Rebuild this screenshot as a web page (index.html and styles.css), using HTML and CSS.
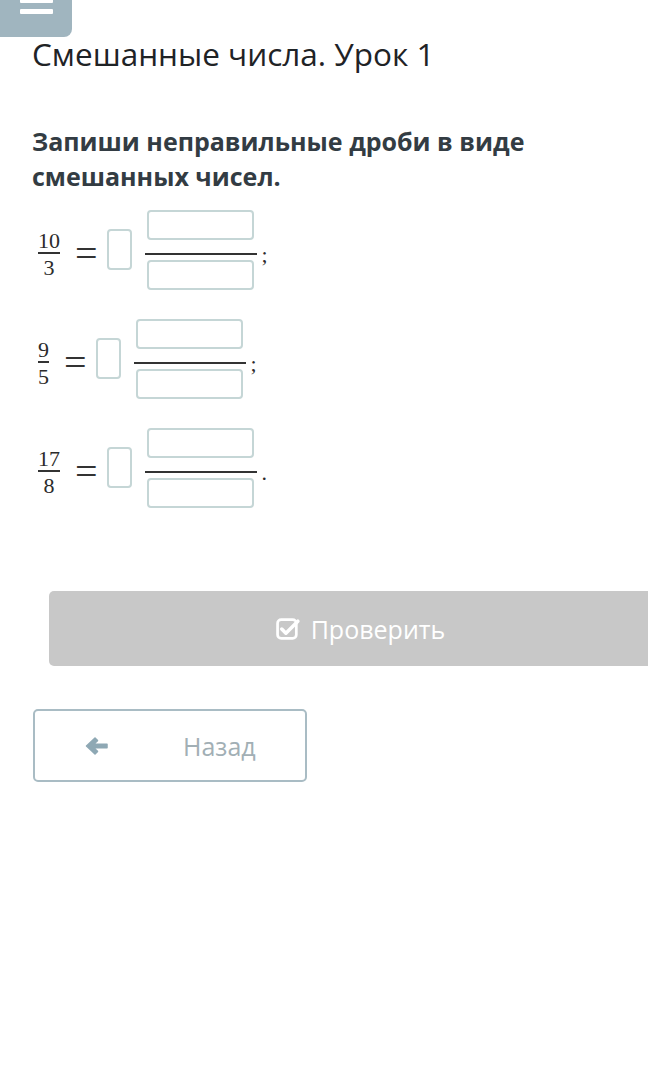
FILE: index.html
```html
<!DOCTYPE html>
<html lang="ru">
<head>
<meta charset="utf-8">
<title>Смешанные числа. Урок 1</title>
<link rel="stylesheet" href="styles.css">
</head>
<body>
<div class="menu-btn" aria-label="Меню">
  <span class="menu-bar bar-a"></span>
  <span class="menu-bar bar-b"></span>
</div>
<main class="page">
  <h1 class="title">Смешанные числа. Урок 1</h1>
  <p class="question">Запиши неправильные дроби в виде смешанных чисел.</p>

  <div class="task">
    <div class="row">
      <span class="frac"><span class="num">10</span><span class="bar"></span><span class="den">3</span></span>
      <span class="eq">=</span>
      <span class="box whole"></span>
      <span class="bigfrac"><span class="box part"></span><span class="bigbar"></span><span class="box part"></span></span>
      <span class="punct">;</span>
    </div>
    <div class="row">
      <span class="frac"><span class="num">9</span><span class="bar"></span><span class="den">5</span></span>
      <span class="eq">=</span>
      <span class="box whole"></span>
      <span class="bigfrac"><span class="box part"></span><span class="bigbar"></span><span class="box part"></span></span>
      <span class="punct">;</span>
    </div>
    <div class="row">
      <span class="frac"><span class="num">17</span><span class="bar"></span><span class="den">8</span></span>
      <span class="eq">=</span>
      <span class="box whole"></span>
      <span class="bigfrac"><span class="box part"></span><span class="bigbar"></span><span class="box part"></span></span>
      <span class="punct">.</span>
    </div>
  </div>

  <button class="check-btn" type="button">
    <svg class="check-icon" width="25" height="23" viewBox="0 0 24 22" aria-hidden="true">
      <rect x="1.5" y="2.5" width="18" height="18" rx="3.5" fill="none" stroke="#fff" stroke-width="2.6"/>
      <path d="M5.5 11.5 L9.5 15.5 L21 4" fill="none" stroke="#fff" stroke-width="3.4" stroke-linecap="round" stroke-linejoin="round"/>
    </svg>
    <span>Проверить</span>
  </button>

  <button class="back-btn" type="button">
    <svg class="back-icon" width="24" height="20" viewBox="0 0 24 20" aria-hidden="true">
      <path d="M1.5 10 L10 2 L12.5 4.6 L8.6 8.2 L22 8.2 L22 11.8 L8.6 11.8 L12.5 15.4 L10 18 Z" fill="#8ea8b4" stroke="#8ea8b4" stroke-width="1.5" stroke-linejoin="round"/>
    </svg>
    <span class="back-text">Назад</span>
  </button>
</main>
</body>
</html>
```
FILE: styles.css
```css
html, body {
  margin: 0;
  padding: 0;
  background: #fff;
  overflow-x: hidden;
}
body {
  width: 648px;
  height: 1092px;
  position: relative;
  font-family: "Open Sans", "Liberation Sans", sans-serif;
}
.menu-btn {
  position: absolute;
  left: 0;
  top: 0;
  width: 72px;
  height: 37px;
  background: #a0b5bf;
  border-bottom-right-radius: 8px;
}
.menu-bar {
  position: absolute;
  left: 20px;
  width: 33px;
  height: 5px;
  background: #fff;
  border-radius: 1px;
}
.bar-a { top: -2px; }
.bar-b { top: 9px; }

.page {
  padding: 32px 0 0 32px;
}
.title {
  margin: 0;
  font-weight: 400;
  font-size: 31.5px;
  line-height: 44px;
  color: #1f2326;
}
.question {
  margin: 48px 0 0 0;
  width: 560px;
  font-weight: 700;
  font-size: 25px;
  line-height: 35px;
  color: #333c43;
}
.task {
  display: flex;
  flex-direction: column;
  gap: 29px;
  margin-top: 16px;
}
.row {
  display: flex;
  align-items: center;
  height: 80px;
  font-family: "Liberation Serif", "DejaVu Serif", serif;
  color: #2b2b2b;
}
.frac {
  display: flex;
  flex-direction: column;
  align-items: center;
  padding: 8px 0 0 6px;
  font-size: 22px;
  line-height: 21px;
}
.frac .bar {
  align-self: stretch;
  height: 1.5px;
  background: #333;
  margin: 1px 0 3px;
}
.eq {
  font-size: 40px;
  line-height: 40px;
  margin: 8px 9px 0 15px;
  color: #333;
}
.box {
  display: block;
  box-sizing: border-box;
  border: 2px solid #c5d6d6;
  border-radius: 4px;
  background: #fff;
}
.whole {
  width: 25px;
  height: 41px;
  margin-top: -2px;
}
.bigfrac {
  display: flex;
  flex-direction: column;
  align-items: center;
  width: 112px;
  margin-left: 13px;
}
.part {
  width: 107px;
  height: 30px;
}
.bigbar {
  align-self: stretch;
  height: 2px;
  background: #333;
  margin: 13px 0 5px;
}
.punct {
  font-size: 22px;
  margin: 10px 0 0 5px;
}

.check-btn {
  display: flex;
  align-items: center;
  justify-content: center;
  gap: 10px;
  margin: 83px 0 0 17px;
  width: 623px;
  height: 75px;
  border: none;
  border-radius: 5px;
  background: #c8c8c8;
  color: #fff;
  font-family: "Open Sans", "Liberation Sans", sans-serif;
  font-size: 25px;
  padding: 0;
}
.check-icon {
  display: block;
}
.back-btn {
  display: flex;
  align-items: center;
  margin: 43px 0 0 1px;
  width: 274px;
  height: 73px;
  box-sizing: border-box;
  border: 2px solid #a9bcc4;
  border-radius: 5px;
  background: #fff;
  padding: 0 0 0 50px;
  font-family: "Open Sans", "Liberation Sans", sans-serif;
  font-size: 25px;
  color: #a2afb5;
}
.back-icon {
  display: block;
}
.back-text {
  margin-left: 74px;
}
```
